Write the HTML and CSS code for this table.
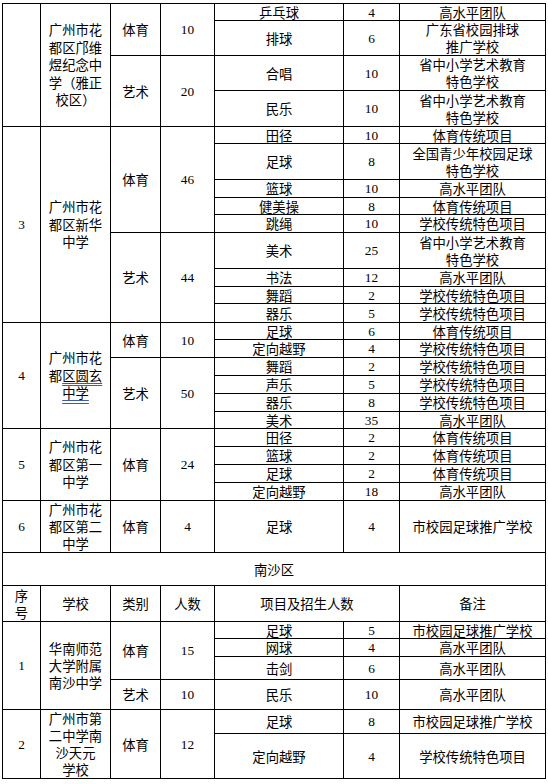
FILE: index.html
```html
<!DOCTYPE html>
<html lang="zh-CN">
<head>
<meta charset="utf-8">
<title>招生项目表</title>
<link rel="stylesheet" href="styles.css">
</head>
<body>
<table class="grid">
  <colgroup>
    <col class="c-no"><col class="c-school"><col class="c-cat"><col class="c-num"><col class="c-proj"><col class="c-pnum"><col class="c-note">
  </colgroup>
  <tbody>
    <tr class="h17">
      <td rowspan="4"></td>
      <td rowspan="4" class="sch">广州市花<br>都区邝维<br>煜纪念中<br>学（雅正<br>校区）</td>
      <td rowspan="2">体育</td><td rowspan="2" class="n">10</td>
      <td>乒乓球</td><td class="n">4</td><td>高水平团队</td>
    </tr>
    <tr class="h35"><td>排球</td><td class="n">6</td><td class="ml">广东省校园排球<br>推广学校</td></tr>
    <tr class="h35">
      <td rowspan="2">艺术</td><td rowspan="2" class="n">20</td>
      <td>合唱</td><td class="n">10</td><td class="ml">省中小学艺术教育<br>特色学校</td>
    </tr>
    <tr class="h36"><td>民乐</td><td class="n">10</td><td class="ml">省中小学艺术教育<br>特色学校</td></tr>

    <tr class="h17">
      <td rowspan="9" class="n">3</td>
      <td rowspan="9" class="sch">广州市花<br>都区新华<br>中学</td>
      <td rowspan="5">体育</td><td rowspan="5" class="n">46</td>
      <td>田径</td><td class="n">10</td><td>体育传统项目</td>
    </tr>
    <tr class="h36"><td>足球</td><td class="n">8</td><td class="ml">全国青少年校园足球<br>特色学校</td></tr>
    <tr class="h18"><td>篮球</td><td class="n">10</td><td>高水平团队</td></tr>
    <tr class="h17"><td>健美操</td><td class="n">8</td><td>体育传统项目</td></tr>
    <tr class="h18"><td>跳绳</td><td class="n">10</td><td>学校传统特色项目</td></tr>
    <tr class="h36">
      <td rowspan="4">艺术</td><td rowspan="4" class="n">44</td>
      <td>美术</td><td class="n">25</td><td class="ml">省中小学艺术教育<br>特色学校</td>
    </tr>
    <tr class="h18"><td>书法</td><td class="n">12</td><td>高水平团队</td></tr>
    <tr class="h17"><td>舞蹈</td><td class="n">2</td><td>学校传统特色项目</td></tr>
    <tr class="h19"><td>器乐</td><td class="n">5</td><td>学校传统特色项目</td></tr>

    <tr class="h17">
      <td rowspan="6" class="n">4</td>
      <td rowspan="6" class="sch">广州市花<br>都<span class="mark">区圆玄</span><br><span class="mark">中学</span></td>
      <td rowspan="2">体育</td><td rowspan="2" class="n">10</td>
      <td>足球</td><td class="n">6</td><td>体育传统项目</td>
    </tr>
    <tr class="h18"><td>定向越野</td><td class="n">4</td><td>学校传统特色项目</td></tr>
    <tr class="h18">
      <td rowspan="4">艺术</td><td rowspan="4" class="n">50</td>
      <td>舞蹈</td><td class="n">2</td><td>学校传统特色项目</td>
    </tr>
    <tr class="h18"><td>声乐</td><td class="n">5</td><td>学校传统特色项目</td></tr>
    <tr class="h18"><td>器乐</td><td class="n">8</td><td>学校传统特色项目</td></tr>
    <tr class="h17"><td>美术</td><td class="n">35</td><td>高水平团队</td></tr>

    <tr class="h18">
      <td rowspan="4" class="n">5</td>
      <td rowspan="4" class="sch">广州市花<br>都区第一<br>中学</td>
      <td rowspan="4">体育</td><td rowspan="4" class="n">24</td>
      <td>田径</td><td class="n">2</td><td>体育传统项目</td>
    </tr>
    <tr class="h18"><td>篮球</td><td class="n">2</td><td>体育传统项目</td></tr>
    <tr class="h18"><td>足球</td><td class="n">2</td><td>体育传统项目</td></tr>
    <tr class="h18"><td>定向越野</td><td class="n">18</td><td>高水平团队</td></tr>

    <tr class="h52">
      <td class="n">6</td>
      <td class="sch tight">广州市花<br>都区第二<br>中学</td>
      <td>体育</td><td class="n">4</td>
      <td>足球</td><td class="n">4</td><td>市校园足球推广学校</td>
    </tr>

    <tr class="h33"><td colspan="7">南沙区</td></tr>

    <tr class="h36">
      <td class="ml">序<br>号</td><td>学校</td><td>类别</td><td>人数</td>
      <td colspan="2">项目及招生人数</td><td>备注</td>
    </tr>

    <tr class="h17">
      <td rowspan="4" class="n">1</td>
      <td rowspan="4" class="sch tight">华南师范<br>大学附属<br>南沙中学</td>
      <td rowspan="3">体育</td><td rowspan="3" class="n">15</td>
      <td>足球</td><td class="n">5</td><td>市校园足球推广学校</td>
    </tr>
    <tr class="h18"><td>网球</td><td class="n">4</td><td>高水平团队</td></tr>
    <tr class="h23"><td>击剑</td><td class="n">6</td><td>高水平团队</td></tr>
    <tr class="h30"><td>艺术</td><td class="n">10</td><td>民乐</td><td class="n">10</td><td>高水平团队</td></tr>

    <tr class="h24">
      <td rowspan="2" class="n">2</td>
      <td rowspan="2" class="sch tight">广州市第<br>二中学南<br>沙天元<br>学校</td>
      <td rowspan="2">体育</td><td rowspan="2" class="n">12</td>
      <td>足球</td><td class="n">8</td><td>市校园足球推广学校</td>
    </tr>
    <tr class="h45"><td>定向越野</td><td class="n">4</td><td>学校传统特色项目</td></tr>
  </tbody>
</table>
</body>
</html>
```
FILE: styles.css
```css
html, body {
  margin: 0;
  padding: 0;
  background: #ffffff;
}

.grid {
  margin: 3px 0 0 2px;
  border-collapse: separate;
  border-spacing: 0;
  table-layout: fixed;
  width: 544px;
  border-left: 1px solid #000;
  border-top: 1px solid #000;
}

.c-no { width: 38px; }
.c-school { width: 70px; }
.c-cat { width: 50px; }
.c-num { width: 54px; }
.c-proj { width: 129px; }
.c-pnum { width: 56px; }
.c-note { width: 146px; }

.grid td {
  box-sizing: border-box;
  border-right: 1px solid #000;
  border-bottom: 1px solid #000;
  padding: 0 7px;
  text-align: center;
  vertical-align: middle;
  font-family: "Noto Sans CJK SC", sans-serif;
  font-size: 13.33px;
  line-height: 15px;
  color: #000;
  white-space: nowrap;
}

.grid td.n {
  font-family: "Liberation Serif", serif;
}

.grid td.ml { line-height: 17px; }
.grid td.sch { line-height: 17.5px; }
.grid td.sch.tight { line-height: 17px; }

.mark {
  text-decoration: underline double #3b5bb5;
  text-underline-offset: 2px;
}

.h17 { height: 17px; }
.h18 { height: 18px; }
.h19 { height: 19px; }
.h23 { height: 23px; }
.h24 { height: 24px; }
.h30 { height: 30px; }
.h33 { height: 33px; }
.h35 { height: 35px; }
.h36 { height: 36px; }
.h45 { height: 45px; }
.h52 { height: 52px; }
```
